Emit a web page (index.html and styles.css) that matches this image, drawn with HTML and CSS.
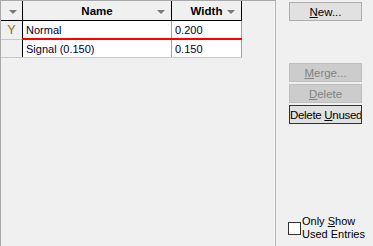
FILE: index.html
```html
<!DOCTYPE html>
<html lang="en">
<head>
  <meta charset="UTF-8" />
  <title>Line Widths</title>
  <link rel="stylesheet" href="styles.css">
</head>
<body>
  <div class="window">
    <div class="grid-panel">
      <table class="grid">
        <thead>
          <tr>
            <th class="sel"><span class="arrow"></span></th>
            <th class="name">Name<span class="arrow"></span></th>
            <th class="width">Width<span class="arrow"></span></th>
          </tr>
        </thead>
        <tbody>
          <tr class="current">
            <td class="sel">Y</td>
            <td>Normal</td>
            <td>0.200</td>
          </tr>
          <tr>
            <td class="sel"></td>
            <td>Signal (0.150)</td>
            <td>0.150</td>
          </tr>
        </tbody>
      </table>
    </div>

    <div class="side">
      <button class="btn btn-new"><u>N</u>ew...</button>
      <button class="btn btn-merge" disabled><u>M</u>erge...</button>
      <button class="btn" disabled><u>D</u>elete</button>
      <button class="btn btn-default">Delete <u>U</u>nused</button>

      <label class="only-used">
        <span class="box"></span>
        <span>Only <u>S</u>how<br>Used Entries</span>
      </label>
    </div>
  </div>
</body>
</html>
```

FILE: styles.css
```css
body {
  margin: 0;
  background: #f0f0f0;
  font-family: Tahoma, 'Liberation Sans', sans-serif;
  font-size: 11px;
  color: #000;
}

.window {
  display: flex;
  height: 246px;
}

.grid-panel {
  width: 274px;
  border: 1px solid #a9a9a9;
  border-bottom: none;
  border-right-color: #b8b8b8;
  box-sizing: content-box;
}

.grid {
  border-collapse: collapse;
  table-layout: fixed;
}

.grid th {
  position: relative;
  height: 19px;
  padding: 0;
  background: #f0f0f0;
  border-right: 1px solid #000;
  border-bottom: 1px solid #000;
  font-weight: bold;
  font-size: 11.5px;
  text-align: center;
  color: #000;
}

.grid th.sel { width: 21px; }
.grid th.name { width: 148px; }
.grid th.width { width: 69px; }

.arrow {
  position: absolute;
  right: 6px;
  top: 9px;
  width: 0;
  height: 0;
  border-left: 4px solid transparent;
  border-right: 4px solid transparent;
  border-top: 4px solid #7a7a7a;
}

.grid th.sel .arrow { right: 5px; }

.grid td {
  height: 17px;
  padding: 0 0 0 3px;
  background: #fff;
  border-right: 1px solid #a0a0a0;
  border-bottom: 1px solid #c8c8c8;
  white-space: nowrap;
  color: #000033;
}

.grid td.sel {
  background: #f0f0f0;
  text-align: center;
  padding: 0;
  color: #8f6f1f;
  font-size: 12.5px;
  border-right-color: #000;
}

.grid tr.current td:not(.sel) {
  border-bottom: 2px solid #f00;
}

.side {
  display: flex;
  flex-direction: column;
  padding: 2px 0 0 13px;
}

.btn {
  width: 73px;
  height: 19px;
  margin: 0 0 2px 0;
  padding: 0;
  background: #e1e1e1;
  border: 1px solid #adadad;
  font-family: inherit;
  font-size: 11.5px;
  color: #000;
  white-space: nowrap;
  overflow: hidden;
}

.btn-new { margin-bottom: 42px; }

.btn:disabled {
  background: #cccccc;
  border-color: #bfbfbf;
  color: #838383;
}

.btn-default {
  border: 1px solid #333;
  letter-spacing: -0.3px;
}

.only-used {
  display: flex;
  align-items: center;
  margin-top: auto;
  margin-bottom: 5px;
  line-height: 13px;
}

.only-used .box {
  width: 11px;
  height: 11px;
  border: 1px solid #333;
  background: #fff;
  margin: 0 1px 0 -1px;
}
```
